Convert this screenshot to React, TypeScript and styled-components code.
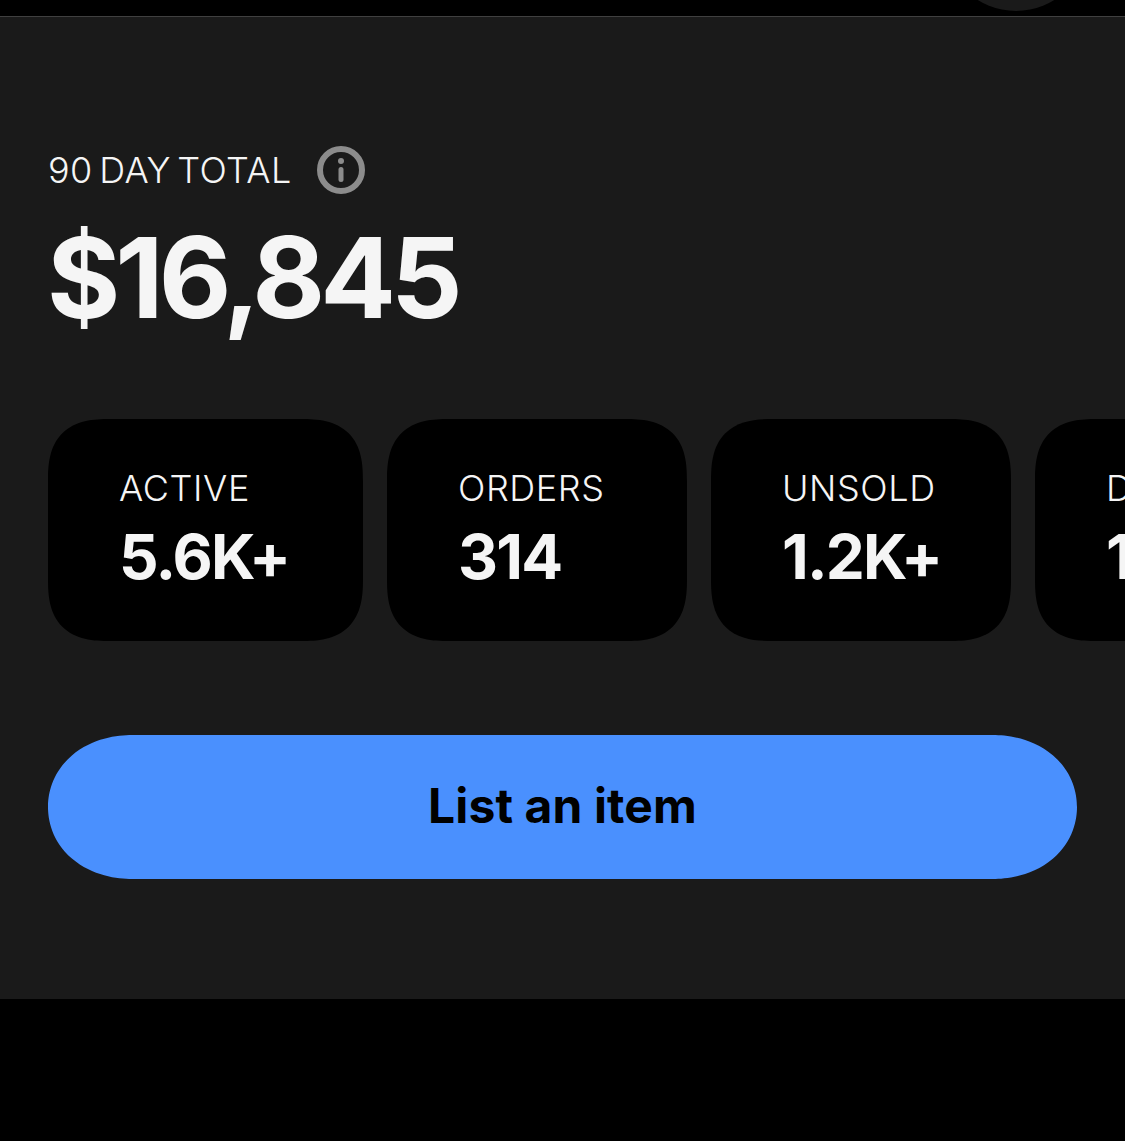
import { createGlobalStyle } from "styled-components";
import styled from "styled-components";

const GlobalStyle = createGlobalStyle`
  html, body {
    margin: 0;
    padding: 0;
    background: #000;
    overflow: hidden;
  }
  body {
    font-family: "Inter", "Liberation Sans", sans-serif;
  }
`;

const stats = [
  { label: "ACTIVE", value: "5.6K+", width: 314.5 },
  { label: "ORDERS", value: "314", width: 299.5 },
  { label: "UNSOLD", value: "1.2K+", width: 299.5 },
  { label: "DRAFTS", value: "12", width: 299.5 },
];

const App = () => {
  return (
    <Page>
      <GlobalStyle />
      <TopBar>
        <AvatarEdge />
      </TopBar>
      <Panel>
        <TotalRow>
          <TotalLabel>90 DAY TOTAL</TotalLabel>
          <InfoIcon viewBox="0 0 48 48" aria-hidden="true">
            <circle cx="24" cy="24" r="21" fill="none" stroke="#8c8c8c" strokeWidth="6" />
            <circle cx="24" cy="15" r="3" fill="#8c8c8c" />
            <rect x="21.5" y="21" width="5" height="15" rx="2.5" fill="#8c8c8c" />
          </InfoIcon>
        </TotalRow>
        <Amount>$16,845</Amount>
        <StatsRow>
          {stats.map(({ label, value, width }) => (
            <StatCard key={label} $width={width}>
              <StatLabel>{label}</StatLabel>
              <StatValue>{value}</StatValue>
            </StatCard>
          ))}
        </StatsRow>
        <ListButton>List an item</ListButton>
      </Panel>
    </Page>
  );
};

const Page = styled.div`
  width: 1125px;
  height: 1141px;
  background: #000;
  overflow: hidden;
`;

const TopBar = styled.div`
  height: 16px;
  display: flex;
  justify-content: flex-end;
  align-items: flex-end;
  padding-right: 37px;
  overflow: hidden;
`;

const AvatarEdge = styled.div`
  width: 144px;
  height: 144px;
  flex-shrink: 0;
  margin-bottom: 5px;
  border-radius: 50%;
  background: #1a1a1a;
`;

const Panel = styled.section`
  height: 983px;
  box-sizing: border-box;
  padding: 128px 48px 0;
  background: #1a1a1a;
  border-top: 1px solid #404040;
  overflow: hidden;
`;

const TotalRow = styled.div`
  display: flex;
  align-items: center;
  gap: 25px;
  height: 50px;
`;

const TotalLabel = styled.span`
  font-size: 36px;
  font-weight: 330;
  letter-spacing: 0.4px;
  word-spacing: -4px;
  color: #f5f5f5;
`;

const InfoIcon = styled.svg`
  width: 48px;
  height: 48px;
`;

const Amount = styled.div`
  margin-top: 16px;
  margin-left: -1px;
  font-size: 112px;
  line-height: 132px;
  font-weight: 650;
  letter-spacing: -5px;
  color: #f5f5f5;
`;

const StatsRow = styled.div`
  display: flex;
  gap: 24.5px;
  margin-top: 76px;
  width: 1300px;
`;

const StatCard = styled.div<{ $width: number }>`
  width: ${(props) => props.$width}px;
  height: 222px;
  flex-shrink: 0;
  box-sizing: border-box;
  padding: 45px 0 0 71px;
  background: #000;
  border-radius: 50px;

  @supports (corner-shape: squircle) {
    border-radius: 62px;
    corner-shape: superellipse(1.4);
  }
`;

const StatLabel = styled.div`
  font-size: 36px;
  line-height: 48px;
  font-weight: 330;
  letter-spacing: 0.6px;
  color: #f5f5f5;
`;

const StatValue = styled.div`
  margin-top: 11px;
  font-size: 62px;
  line-height: 68px;
  font-weight: 650;
  letter-spacing: -1.8px;
  color: #f5f5f5;
`;

const ListButton = styled.button`
  display: block;
  width: 1029px;
  height: 144px;
  margin-top: 94px;
  padding: 0 0 3px;
  border: 0;
  border-radius: 72px;
  background: #4a90fe;
  color: #000;
  font-family: inherit;
  font-size: 48px;
  font-weight: 700;
  letter-spacing: 0.1px;

  @supports (corner-shape: squircle) {
    border-radius: 84px / 72px;
    corner-shape: superellipse(1.05);
  }
`;

export default App;
